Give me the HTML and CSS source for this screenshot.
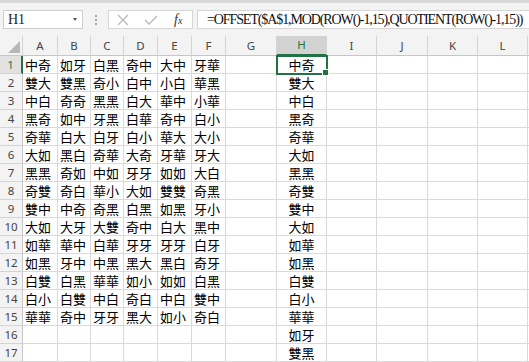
FILE: index.html
```html
<!DOCTYPE html>
<html lang="zh-Hant">
<head>
    <meta charset="UTF-8">
    <meta name="viewport" content="width=device-width, initial-scale=1.0">
    <title>Sheet1</title>
    <link rel="stylesheet" href="styles.css">
</head>
<body>

    <div class="formula-bar">
        <div class="name-box">
            <span class="name-text">H1</span>
            <span class="name-arrow"></span>
        </div>
        <div class="grip">
            <span></span><span></span><span></span>
        </div>
        <div class="fx-box">
            <svg class="fx-icon" width="12" height="12" viewBox="0 0 12 12">
                <path d="M1 1 L11 11 M11 1 L1 11" stroke="#b8b8b8" stroke-width="1.3" fill="none"/>
            </svg>
            <svg class="fx-icon" width="14" height="12" viewBox="0 0 14 12">
                <path d="M1 6 L5 10 L13 2" stroke="#b8b8b8" stroke-width="1.3" fill="none"/>
            </svg>
            <span class="fx-label">f<small>x</small></span>
        </div>
        <div class="formula-input">=OFFSET($A$1,MOD(ROW()-1,15),QUOTIENT(ROW()-1,15))</div>
    </div>

    <div class="sheet" id="sheet"></div>

    <script>
        const data = [
            ["中奇", "如牙", "白黑", "奇中", "大中", "牙華"],
            ["雙大", "雙黑", "奇小", "白中", "小白", "華黑"],
            ["中白", "奇奇", "黑黑", "白大", "華中", "小華"],
            ["黑奇", "如中", "牙黑", "白華", "奇中", "白小"],
            ["奇華", "白大", "白牙", "白小", "華大", "大小"],
            ["大如", "黑白", "奇華", "大奇", "牙華", "牙大"],
            ["黑黑", "奇如", "中如", "牙牙", "如如", "大白"],
            ["奇雙", "奇白", "華小", "大如", "雙雙", "奇黑"],
            ["雙中", "中奇", "奇黑", "白黑", "如黑", "牙小"],
            ["大如", "大牙", "大雙", "奇中", "白大", "黑中"],
            ["如華", "華中", "白華", "牙牙", "牙牙", "白牙"],
            ["如黑", "牙中", "中黑", "黑大", "黑白", "奇牙"],
            ["白雙", "白黑", "華華", "如小", "如如", "白黑"],
            ["白小", "白雙", "中白", "奇白", "中白", "雙中"],
            ["華華", "奇中", "牙牙", "黑大", "如小", "奇白"]
        ];
        const letters = ["A", "B", "C", "D", "E", "F", "G", "H", "I", "J", "K", "L"];
        const sheet = document.getElementById("sheet");

        function addCell(cls, text) {
            const cell = document.createElement("div");
            cell.className = cls;
            cell.textContent = text || "";
            sheet.appendChild(cell);
            return cell;
        }

        // column header row
        addCell("corner");
        letters.forEach(l => addCell(l === "H" ? "col-head active" : "col-head", l));
        addCell("col-head");

        // H column = the A:F block read down each column
        const stacked = [];
        for (let c = 0; c < 6; c++) {
            for (let r = 0; r < 15; r++) stacked.push(data[r][c]);
        }

        for (let r = 0; r < 17; r++) {
            addCell(r === 0 ? "row-head active" : "row-head", r + 1);
            for (let c = 0; c < 12; c++) {
                let text = "";
                if (c < 6 && r < 15) text = data[r][c];
                if (letters[c] === "H") text = stacked[r];
                let cls = "cell";
                if (letters[c] === "H") cls += " center";
                if (letters[c] === "H" && r === 0) cls += " selected";
                addCell(cls, text);
            }
            addCell("cell");
        }
    </script>
</body>
</html>
```

FILE: styles.css
```css
body {
    margin: 0;
    background-color: #ffffff;
    font-family: "Noto Sans", "Liberation Sans", sans-serif;
    overflow: hidden;
}

.formula-bar {
    height: 36px;
    box-sizing: border-box;
    background-color: #f3f3f3;
    border-top: 3px solid #d8d8d8;
    display: flex;
    align-items: flex-start;
    padding: 7px 0 0 3px;
}

.name-box {
    width: 80px;
    height: 19px;
    box-sizing: border-box;
    background-color: #ffffff;
    border: 1px solid #cfcfcf;
    display: flex;
    align-items: center;
    justify-content: space-between;
    padding: 0 4px 0 4px;
}

.name-text {
    font-family: "Liberation Serif", serif;
    font-size: 14px;
    color: #222222;
}

.name-arrow {
    width: 0;
    height: 0;
    border-left: 2.5px solid transparent;
    border-right: 2.5px solid transparent;
    border-top: 3px solid #555555;
    margin-right: 1px;
}

.grip {
    width: 25px;
    height: 19px;
    display: flex;
    flex-direction: column;
    align-items: center;
    justify-content: center;
    gap: 2px;
}

.grip span {
    width: 2px;
    height: 2px;
    background-color: #a8a8a8;
}

.fx-box {
    width: 85px;
    height: 19px;
    box-sizing: border-box;
    background-color: #ffffff;
    border: 1px solid #d6d6d6;
    display: flex;
    align-items: center;
    padding-left: 8px;
    gap: 15px;
}

.fx-label {
    font-family: "Liberation Serif", serif;
    font-style: italic;
    font-size: 14px;
    color: #333333;
    margin-left: 1px;
}

.fx-label small {
    font-size: 10px;
}

.formula-input {
    flex: 1;
    height: 19px;
    box-sizing: border-box;
    margin-left: 4px;
    background-color: #ffffff;
    border: 1px solid #d6d6d6;
    border-right: none;
    padding-left: 9px;
    font-family: "Liberation Serif", serif;
    font-size: 14px;
    letter-spacing: -1.1px;
    line-height: 17px;
    color: #111111;
    white-space: nowrap;
    overflow: hidden;
}

.sheet {
    display: grid;
    grid-template-columns: 23px 35px 33px 33px 34px 34px 34px 51px 50px 50px 51px 50px 50px 1fr;
    grid-template-rows: 20px repeat(17, 18px);
}

.corner {
    background-color: #f3f3f3;
    border-right: 1px solid #d4d4d4;
    border-bottom: 1px solid #c6c6c6;
    position: relative;
}

.corner::after {
    content: "";
    position: absolute;
    right: 2px;
    bottom: 2px;
    width: 0;
    height: 0;
    border-left: 12px solid transparent;
    border-bottom: 12px solid #b7b7b7;
}

.col-head {
    background-color: #f3f3f3;
    border-right: 1px solid #d4d4d4;
    border-bottom: 1px solid #c6c6c6;
    font-size: 11.5px;
    line-height: 19px;
    text-align: center;
    color: #444444;
}

.col-head.active {
    background-color: #d2d2d2;
    color: #217346;
    border-bottom: 2px solid #217346;
    line-height: 18px;
}

.row-head {
    background-color: #f3f3f3;
    border-right: 1px solid #c6c6c6;
    border-bottom: 1px solid #d4d4d4;
    font-size: 11.5px;
    line-height: 17px;
    text-align: center;
    color: #444444;
}

.row-head.active {
    background-color: #e1e1e1;
    color: #217346;
    border-right: 2px solid #217346;
}

.cell {
    border-right: 1px solid #dadada;
    border-bottom: 1px solid #dadada;
    font-family: "Noto Sans CJK TC", "Noto Sans CJK SC", sans-serif;
    font-size: 13px;
    line-height: 17px;
    padding-left: 2px;
    color: #000000;
    white-space: nowrap;
    overflow: hidden;
}

.cell.center {
    text-align: center;
    padding-left: 0;
}

.cell.selected {
    position: relative;
    overflow: visible;
    outline: 2px solid #217346;
    outline-offset: -1px;
}

.cell.selected::after {
    content: "";
    position: absolute;
    right: -3px;
    bottom: -3px;
    width: 5px;
    height: 5px;
    background-color: #217346;
    border: 1px solid #ffffff;
}
```
